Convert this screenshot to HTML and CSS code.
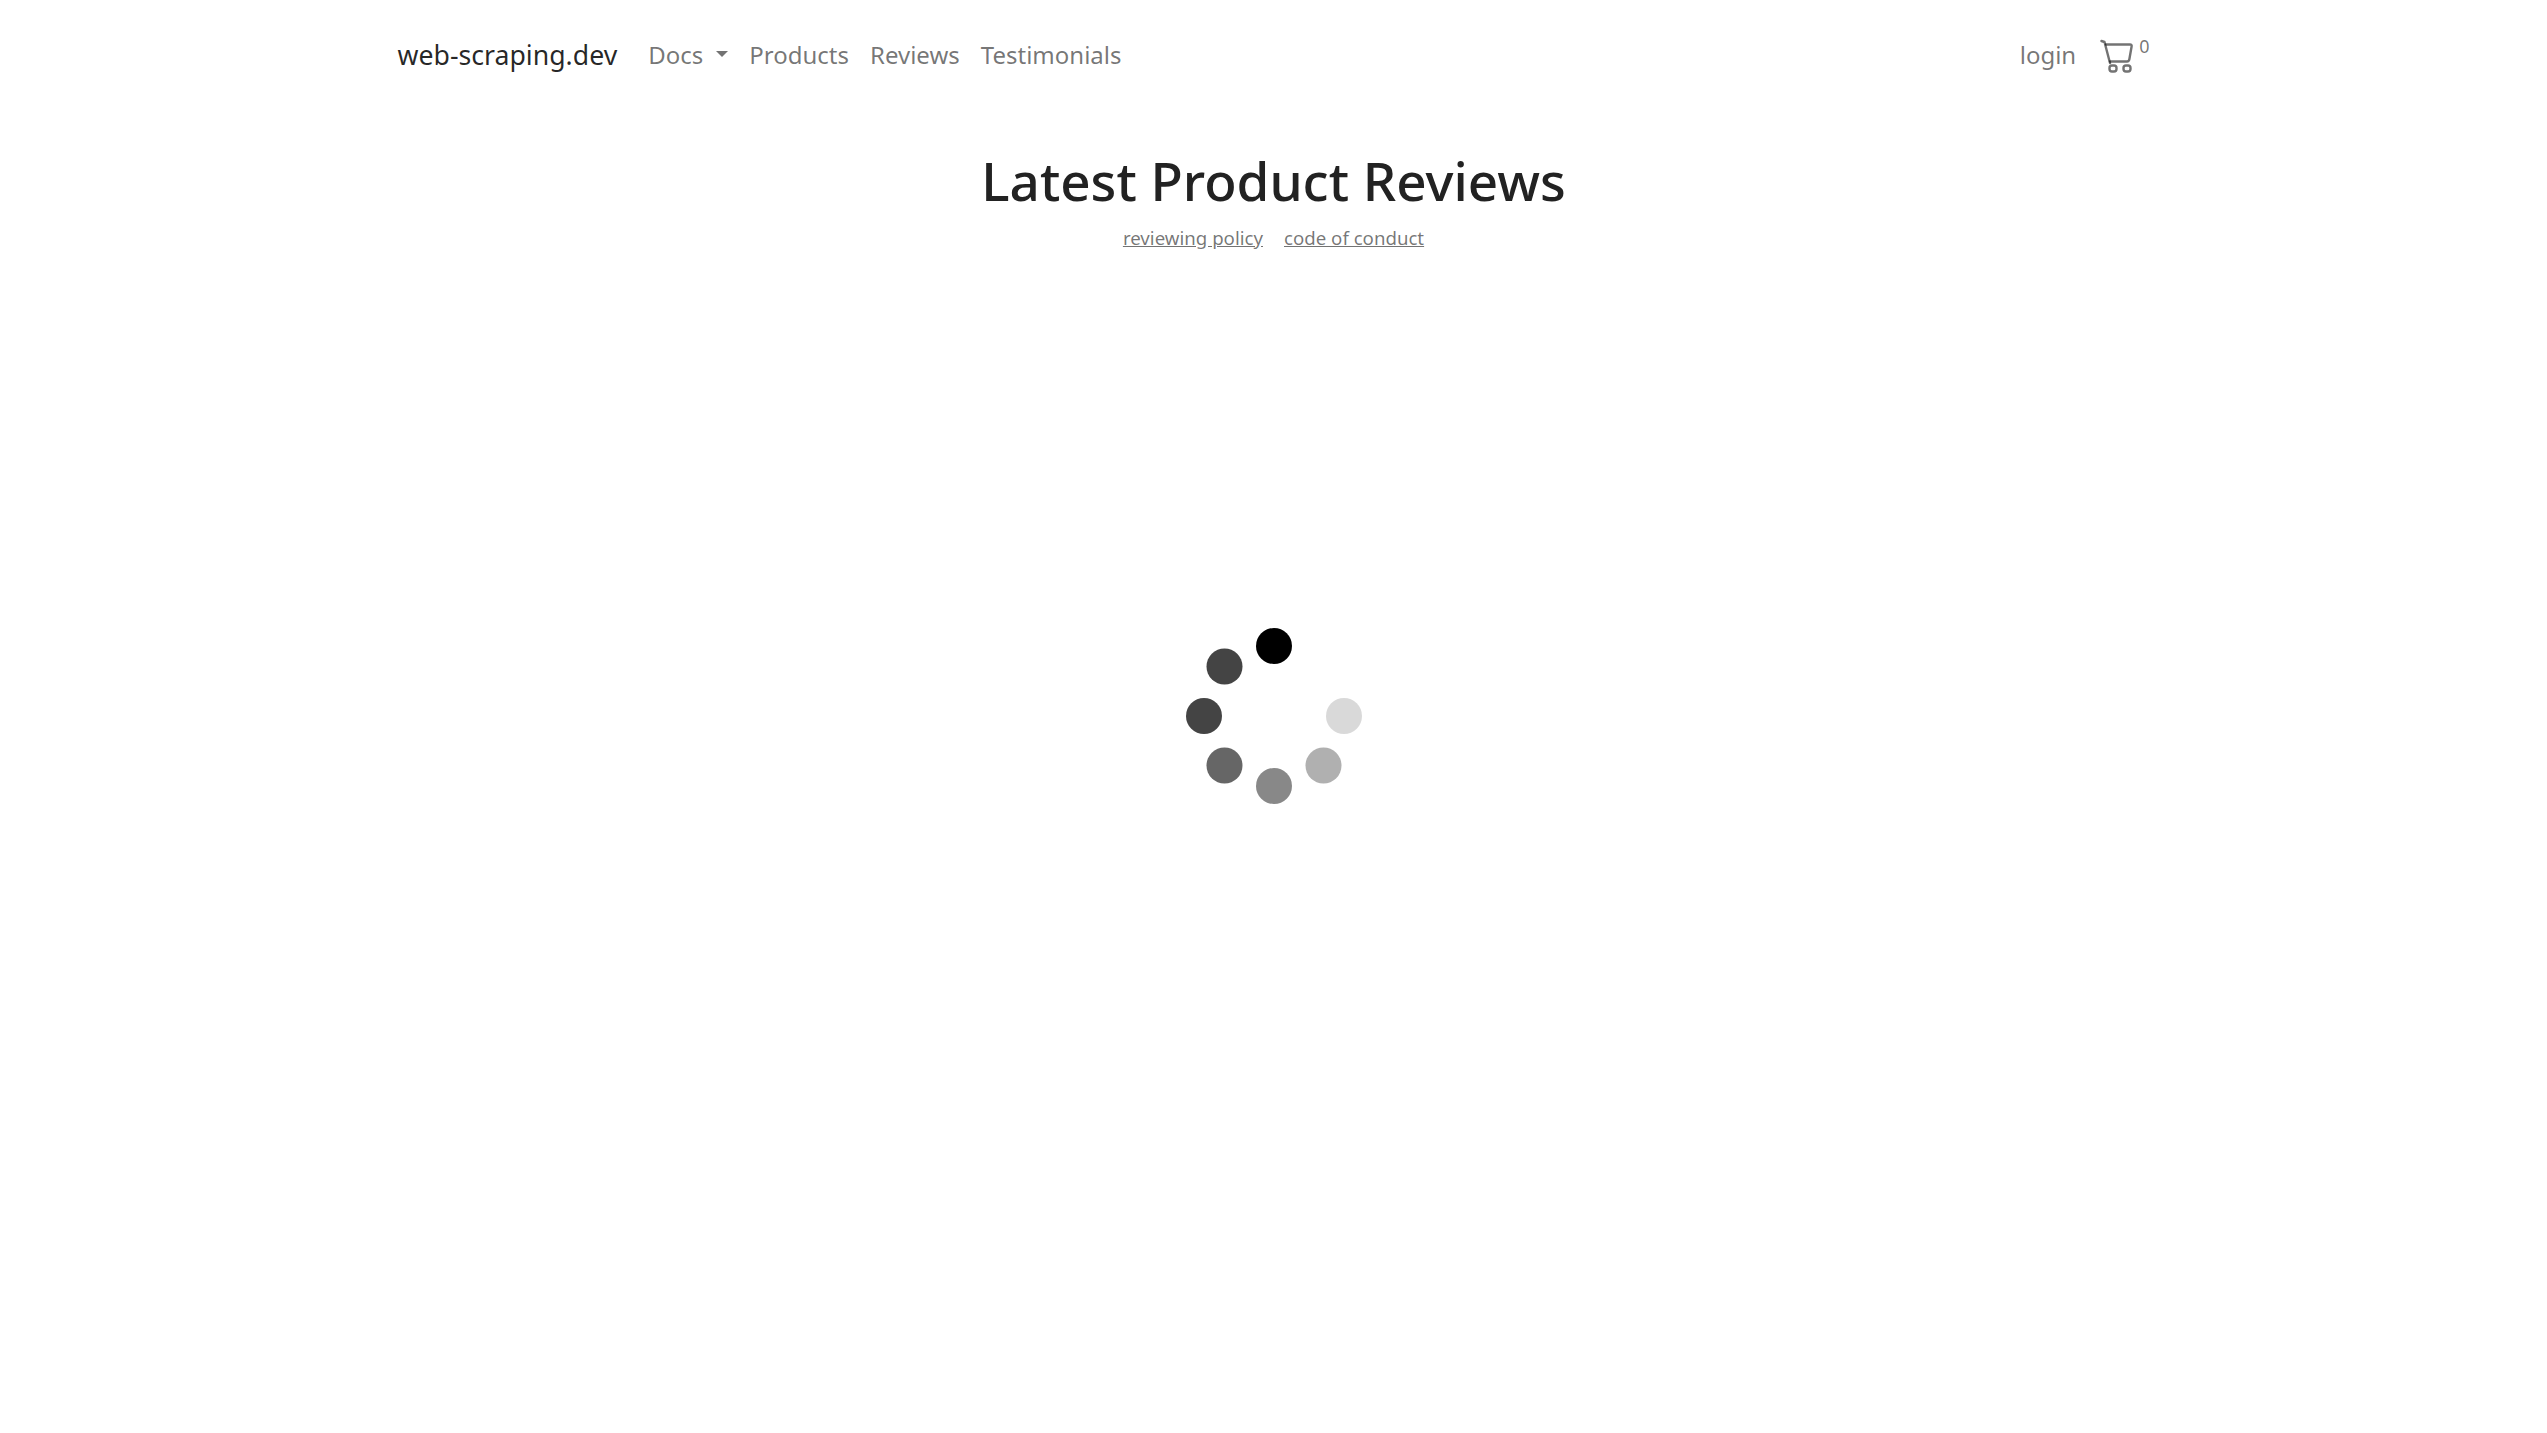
FILE: index.html
```html
<!DOCTYPE html>
<html lang="en">
<head>
    <meta charset="UTF-8">
    <meta name="viewport" content="width=device-width, initial-scale=1.0">
    <title>web-scraping.dev product reviews</title>
    <link rel="stylesheet" href="styles.css">
</head>
<body>
    <nav class="navbar">
        <a class="brand" href="#">web-scraping.dev</a>
        <ul class="nav-links">
            <li><a href="#">Docs<span class="caret"></span></a></li>
            <li><a href="#">Products</a></li>
            <li><a href="#">Reviews</a></li>
            <li><a href="#">Testimonials</a></li>
        </ul>
        <div class="nav-right">
            <a class="login" href="#">login</a>
            <a class="cart" href="#">
                <svg class="cart-icon" viewBox="0 0 34 34" fill="none" stroke="currentColor" stroke-width="2.4" stroke-linecap="round" stroke-linejoin="round">
                    <path d="M1.5 2 L4.5 3 L10 24"/>
                    <path d="M6 5.5 H30 Q32 5.5 31.6 7.5 L29.4 20 Q29 22.5 27 22.5 H10"/>
                    <rect x="9.5" y="26.5" width="7" height="6" rx="2.5"/>
                    <rect x="23.5" y="26.5" width="7" height="6" rx="2.5"/>
                </svg>
                <span class="cart-count">0</span>
            </a>
        </div>
    </nav>

    <main class="content">
        <h1>Latest Product Reviews</h1>
        <div class="sub-links">
            <a href="#">reviewing policy</a>
            <a href="#">code of conduct</a>
        </div>

        <svg class="spinner" viewBox="0 0 176 176">
            <circle cx="88" cy="18" r="18" fill="#000"/>
            <circle cx="38.5" cy="38.5" r="18" fill="#444"/>
            <circle cx="18" cy="88" r="18" fill="#444"/>
            <circle cx="38.5" cy="137.5" r="18" fill="#666"/>
            <circle cx="88" cy="158" r="18" fill="#888"/>
            <circle cx="137.5" cy="137.5" r="18" fill="#b0b0b0"/>
            <circle cx="158" cy="88" r="18" fill="#d9d9d9"/>
        </svg>
    </main>
</body>
</html>
```

FILE: styles.css
```css
* {
    box-sizing: border-box;
}

body {
    margin: 0;
    min-height: 1433px;
    background-color: #fff;
    color: #222;
    font-family: "Noto Sans", sans-serif;
    font-size: 24px;
}

a {
    text-decoration: none;
    color: rgba(0, 0, 0, 0.55);
}

.navbar {
    display: flex;
    align-items: center;
    width: 1752px;
    height: 108px;
    margin: 0 auto;
}

.brand {
    margin-right: 31px;
    font-size: 26.67px;
    color: rgba(0, 0, 0, 0.85);
}

.nav-links {
    display: flex;
    gap: 21px;
    margin: 0;
    padding: 0;
    list-style: none;
}

.caret {
    display: inline-block;
    margin-left: 13px;
    vertical-align: 7px;
    border-top: 6px solid;
    border-left: 6px solid transparent;
    border-right: 6px solid transparent;
}

.nav-right {
    display: flex;
    align-items: center;
    margin-left: auto;
}

.login {
    margin-right: 24px;
}

.cart {
    display: flex;
    align-items: flex-start;
}

.cart-icon {
    width: 34px;
    height: 34px;
    margin-top: 3px;
}

.cart-count {
    margin-left: 5px;
    margin-top: -2px;
    font-size: 18px;
}

.content {
    display: flex;
    flex-direction: column;
    align-items: center;
}

h1 {
    margin: 41px 0 0;
    font-size: 53px;
    font-weight: 500;
    line-height: 64px;
}

.sub-links {
    display: flex;
    gap: 21px;
    margin-top: 12px;
    font-size: 18.67px;
}

.sub-links a {
    text-decoration: underline;
}

.spinner {
    width: 176px;
    height: 176px;
    margin-top: 378px;
}
```
